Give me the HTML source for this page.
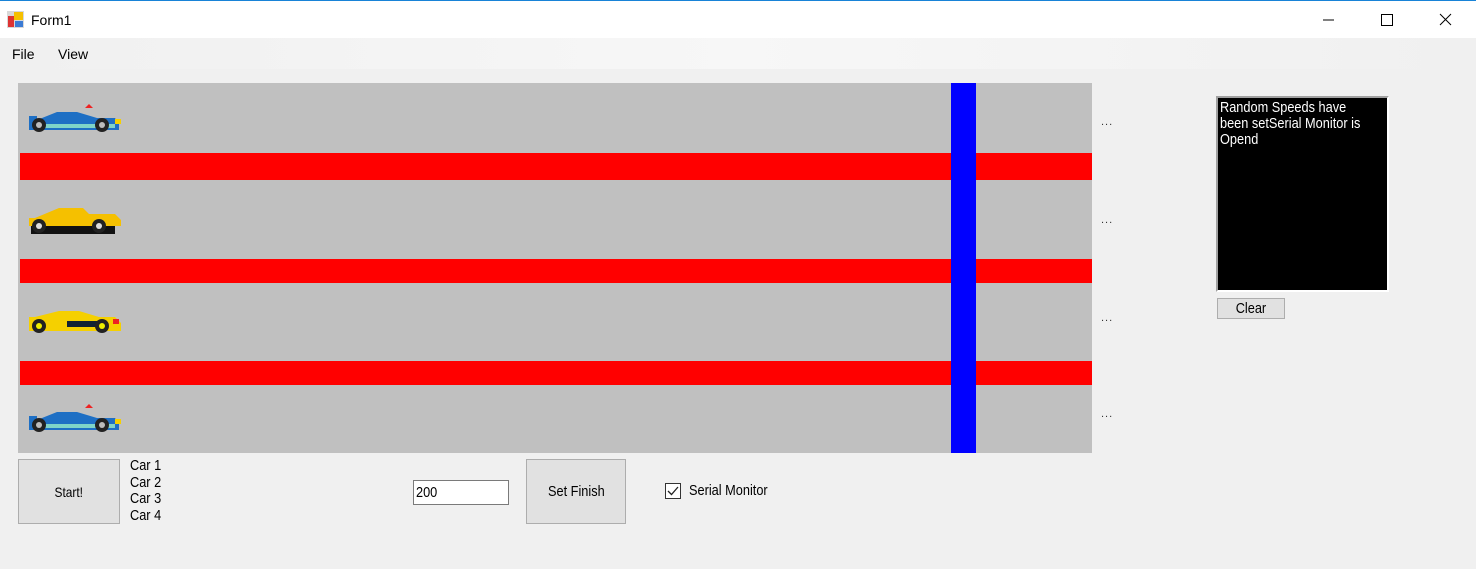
<!DOCTYPE html>
<html><head><style>
*{margin:0;padding:0;box-sizing:border-box}
body{width:1476px;height:569px;background:#f0f0f0;font-family:"Liberation Sans",sans-serif;position:relative;overflow:hidden;font-size:13px;color:#000}
.a{position:absolute}
.n{display:inline-block;transform:scaleX(.85);transform-origin:left center;white-space:nowrap}
.btn{position:absolute;background:#e1e1e1;border:1px solid #adadad;display:flex;align-items:center;justify-content:center}
.btn .n{transform-origin:center center}
.red{position:absolute;left:20px;width:1072px;background:#ff0000}
.dots{position:absolute;left:1101px;font-size:11px;color:#333;letter-spacing:1px}
</style></head><body>
<div class="a" style="left:0;top:0;width:1476px;height:38px;background:#fff;border-top:1px solid #1883d7"></div>
<svg class="a" style="left:7px;top:11px" width="17" height="17" viewBox="0 0 17 17"><rect x="0" y="0" width="17" height="17" fill="#d8d8d8"/><rect x="7" y="1" width="9" height="8" fill="#f5c000"/><rect x="1" y="5" width="6" height="11" fill="#d33"/><rect x="8" y="10" width="8" height="6" fill="#3a7bd5"/></svg>
<div class="a" style="left:31px;top:12px;font-size:14px">Form1</div>
<svg class="a" style="left:1322px;top:12px" width="135" height="16"><line x1="1" y1="8" x2="12" y2="8" stroke="#000"/><rect x="59.5" y="2.5" width="11" height="11" fill="none" stroke="#000"/><path d="M118 2 L129 13 M129 2 L118 13" stroke="#000"/></svg>
<div class="a" style="left:0;top:38px;width:1476px;height:31px;background:linear-gradient(90deg,#f0f0f0,#f7f7f7 50%,#f0f0f0)"></div>
<div class="a" style="left:12px;top:46px;font-size:14px">File</div>
<div class="a" style="left:58px;top:46px;font-size:14px">View</div>

<div class="a" style="left:18px;top:83px;width:1074px;height:370px;background:#c0c0c0"></div>
<div class="red" style="top:153px;height:27px"></div>
<div class="red" style="top:259px;height:24px"></div>
<div class="red" style="top:361px;height:24px"></div>
<div class="a" style="left:951px;top:83px;width:25px;height:370px;background:#0000ff"></div>

<svg class="a" style="left:27px;top:100px" width="96" height="34" viewBox="0 0 96 34"><path d="M2 16 h8 v4 l20-8 h20 l20 6 h18 l4 6 v6 H2z" fill="#1e6fc4"/><rect x="8" y="24" width="80" height="4" fill="#7fd4c8"/><path d="M58 8 l4 -4 l4 4 z" fill="#e22"/><circle cx="12" cy="25" r="7" fill="#222"/><circle cx="12" cy="25" r="3" fill="#bbb"/><circle cx="75" cy="25" r="7" fill="#222"/><circle cx="75" cy="25" r="3" fill="#bbb"/><rect x="88" y="19" width="6" height="5" fill="#f5d000"/></svg>
<svg class="a" style="left:27px;top:200px" width="96" height="40" viewBox="0 0 96 40"><path d="M2 18 h6 l24-10 h24 l6 6 h26 l6 6 v6 H2z" fill="#f5c000"/><rect x="4" y="26" width="84" height="8" fill="#111"/><circle cx="12" cy="26" r="7" fill="#222"/><circle cx="12" cy="26" r="3" fill="#ddd"/><circle cx="72" cy="26" r="7" fill="#222"/><circle cx="72" cy="26" r="3" fill="#ddd"/></svg>
<svg class="a" style="left:27px;top:303px" width="96" height="34" viewBox="0 0 96 34"><path d="M2 14 h6 l24-6 h20 l20 6 h16 l6 6 v8 H2z" fill="#f5d000"/><rect x="40" y="18" width="30" height="6" fill="#123"/><circle cx="12" cy="23" r="7" fill="#222"/><circle cx="12" cy="23" r="3" fill="#ee0"/><circle cx="75" cy="23" r="7" fill="#222"/><circle cx="75" cy="23" r="3" fill="#ee0"/><rect x="86" y="16" width="6" height="5" fill="#e22"/></svg>
<svg class="a" style="left:27px;top:400px" width="96" height="34" viewBox="0 0 96 34"><path d="M2 16 h8 v4 l20-8 h20 l20 6 h18 l4 6 v6 H2z" fill="#1e6fc4"/><rect x="8" y="24" width="80" height="4" fill="#7fd4c8"/><path d="M58 8 l4 -4 l4 4 z" fill="#e22"/><circle cx="12" cy="25" r="7" fill="#222"/><circle cx="12" cy="25" r="3" fill="#bbb"/><circle cx="75" cy="25" r="7" fill="#222"/><circle cx="75" cy="25" r="3" fill="#bbb"/><rect x="88" y="19" width="6" height="5" fill="#f5d000"/></svg>

<div class="dots" style="top:116px">...</div>
<div class="dots" style="top:214px">...</div>
<div class="dots" style="top:312px">...</div>
<div class="dots" style="top:408px">...</div>

<div class="a" style="left:1216px;top:96px;width:173px;height:196px;background:#000;border:2px solid #a0a0a0;border-right-color:#fff;border-bottom-color:#fff;color:#fff;padding:2px 2px;font-size:15px;line-height:16px"><span class="n">Random Speeds have<br>been setSerial Monitor is<br>Opend</span></div>
<div class="btn" style="left:1217px;top:298px;width:68px;height:21px"><span class="n" style="font-size:15px">Clear</span></div>

<div class="btn" style="left:18px;top:459px;width:102px;height:65px"><span class="n" style="font-size:14px">Start!</span></div>
<div class="a" style="left:130px;top:458px;font-size:15px;line-height:16.5px"><span class="n">Car 1<br>Car 2<br>Car 3<br>Car 4</span></div>
<div class="a" style="left:413px;top:480px;width:96px;height:25px;background:#fff;border:1px solid #7a7a7a;padding:3px 2px;font-size:15px"><span class="n">200</span></div>
<div class="btn" style="left:526px;top:459px;width:100px;height:65px"><span class="n" style="font-size:15px">Set Finish</span></div>
<div class="a" style="left:665px;top:483px;width:16px;height:16px;background:#fff;border:1px solid #333"></div>
<svg class="a" style="left:665px;top:483px" width="16" height="16"><path d="M3 8 L6.5 11.5 L13 4" stroke="#222" stroke-width="1.3" fill="none"/></svg>
<div class="a" style="left:689px;top:482px;font-size:15px"><span class="n">Serial Monitor</span></div>
</body></html>
